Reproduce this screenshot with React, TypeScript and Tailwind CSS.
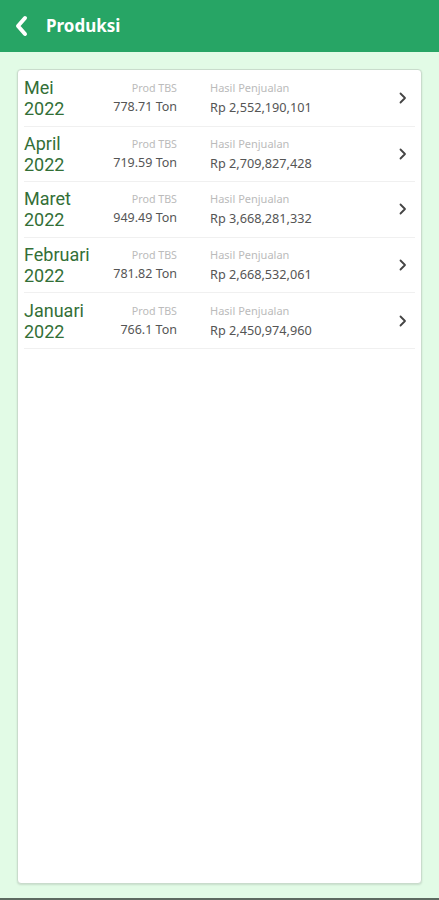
import React from "react";

const rows = [
  { m: "Mei", y: "2022", t: "778.71 Ton", r: "Rp 2,552,190,101" },
  { m: "April", y: "2022", t: "719.59 Ton", r: "Rp 2,709,827,428" },
  { m: "Maret", y: "2022", t: "949.49 Ton", r: "Rp 3,668,281,332" },
  { m: "Februari", y: "2022", t: "781.82 Ton", r: "Rp 2,668,532,061" },
  { m: "Januari", y: "2022", t: "766.1 Ton", r: "Rp 2,450,974,960" },
];

export default function App() {
  return (
    <div
      className="h-[900px] w-full flex flex-col bg-[#e2fbe6]"
      style={{ fontFamily: '"Noto Sans", "Open Sans", sans-serif' }}
    >
      <header className="h-[52px] shrink-0 bg-[#27a565] flex items-center pl-[13px]">
        <svg width="18" height="22" viewBox="0 0 18 22" fill="none">
          <path d="M12 3 L5 11 L12 19" stroke="white" strokeWidth="4" strokeLinecap="round" strokeLinejoin="round" />
        </svg>
        <span className="ml-[15px] text-white text-[17px] font-bold">Produksi</span>
      </header>
      <main className="flex-1 flex flex-col px-[17px] pt-[17px] pb-[14px]">
        <div className="flex-1 bg-white rounded-[4px] border border-[#c9dccc] shadow-[0_1px_2px_rgba(0,0,0,0.12)] px-[6px] pt-[1px]">
          {rows.map((row) => (
            <div
              key={row.m}
              className="h-[55.6px] flex items-center border-b border-[#f0f0f0]"
            >
              <div
                className="w-[86px] text-[18px] leading-[21px] text-[#336f37]"
                style={{ fontFamily: 'Roboto, "Noto Sans", sans-serif' }}
              >
                <div>{row.m}</div>
                <div>{row.y}</div>
              </div>
              <div className="w-[67px] text-right">
                <div className="text-[10.7px] leading-[18px] text-[#bbbbbb]">Prod TBS</div>
                <div className="text-[12.5px] leading-[20px] text-[#555555]">{row.t}</div>
              </div>
              <div className="ml-[33px] flex-1">
                <div className="text-[11px] leading-[18px] text-[#bbbbbb]">Hasil Penjualan</div>
                <div className="text-[12.7px] leading-[20px] text-[#555555]">{row.r}</div>
              </div>
              <div className="w-[20px] mr-[3px] flex justify-center">
                <svg width="10" height="14" viewBox="0 0 10 14" fill="none">
                  <path d="M3.5 2.5 L8 7 L3.5 11.5" stroke="#444" strokeWidth="1.8" strokeLinecap="round" strokeLinejoin="round" />
                </svg>
              </div>
            </div>
          ))}
        </div>
      </main>
      <div className="h-[2px] bg-[#5d6b61] shrink-0" />
    </div>
  );
}
